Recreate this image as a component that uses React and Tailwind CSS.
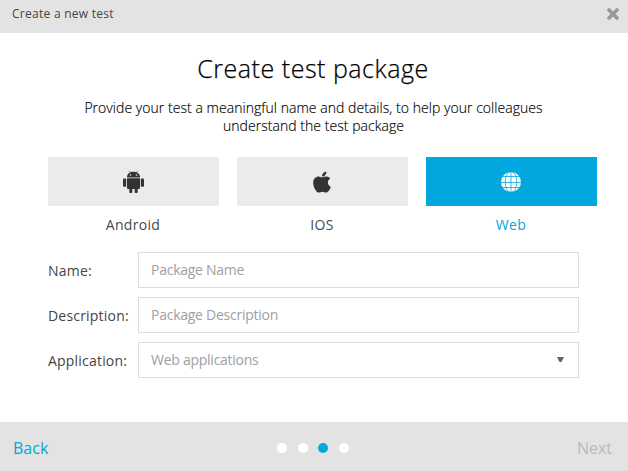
import { FaApple } from "react-icons/fa";

function AndroidIcon() {
  return (
    <svg width="21" height="24" viewBox="0 0 21 24" fill="#333" aria-hidden="true">
      <path d="M6.200 .8 8 3M14.800 .8 13 3" stroke="#555" strokeWidth=".8" />
      <path d="M4 7.400C4 4 6.600 1.800 10.500 1.800s6.500 2.200 6.500 5.600z" />
      <circle cx="7.500" cy="5" r=".8" fill="#ebebeb" />
      <circle cx="13.500" cy="5" r=".8" fill="#ebebeb" />
      <path d="M4 8.200h13V18a1 1 0 0 1-1 1H5a1 1 0 0 1-1-1z" />
      <rect x="0" y="8.500" width="3.200" height="8.300" rx="1" />
      <rect x="17.800" y="8.500" width="3.200" height="8.300" rx="1" />
      <rect x="6.300" y="17" width="3" height="6" rx="1" />
      <rect x="11.700" y="17" width="3" height="6" rx="1" />
    </svg>
  );
}

function GlobeIcon() {
  return (
    <svg width="20" height="20" viewBox="0 0 20 20" aria-hidden="true">
      <circle cx="10" cy="10" r="10" fill="#fff" />
      <g fill="none" stroke="#02a7de" strokeWidth=".8">
        <path d="M10 0v20M0 10.500h20M1 4.500h18M1 15.500h18" />
        <ellipse cx="10" cy="10" rx="5.800" ry="10.500" />
      </g>
    </svg>
  );
}

function Platform({ label, active, children }) {
  return (
    <div className="w-[171px]">
      <div className={"flex h-[49px] items-center justify-center " + (active ? "bg-[#02a7de] pr-[2px]" : "bg-[#ebebeb] pr-px")}>
        {children}
      </div>
      <div className={"mt-[9px] pr-px text-center text-[14px] leading-5 tracking-[0.3px] " + (active ? "text-[#02a7de]" : "text-[#4a4a4a]")}>
        {label}
      </div>
    </div>
  );
}

function Field({ label, value, select }) {
  return (
    <div className="flex h-9 items-center">
      <label className="w-[90px] whitespace-nowrap text-[14px] tracking-[0.2px] text-[#444]">{label}</label>
      <div className="flex h-9 w-[441px] items-center justify-between border border-[#dcdcdc] pr-[14px] pb-px pl-3 text-[14px] tracking-[-0.26px] text-[#a0a0a0]">
        <span>{value}</span>
        {select && (
          <svg width="7" height="5" viewBox="0 0 7 5" fill="#666" aria-hidden="true">
            <path d="M0 0h7L4.500 5h-2z" />
          </svg>
        )}
      </div>
    </div>
  );
}

export default function App() {
  return (
    <div className="flex h-[471px] w-[628px] flex-col overflow-hidden bg-white font-['Open_Sans',sans-serif]">
      <header className="flex h-[33px] items-center justify-between bg-[#e3e3e3] pr-[9px] pb-[5px] pl-3">
        <span className="text-[12px] tracking-[0.27px] text-[#444]">Create a new test</span>
        <svg width="12" height="12" viewBox="0 0 12 12" aria-hidden="true">
          <path d="M2 2l8 8M10 2l-8 8" stroke="#999" strokeWidth="3.600" strokeLinecap="round" />
        </svg>
      </header>
      <main className="flex-1">
        <h1 className="mt-[17px] pr-[2px] text-center text-[25px] leading-9 font-light tracking-[0.52px] text-black [-webkit-text-stroke:0.25px_#000]">Create test package</h1>
        <p className="mt-[13px] pr-px text-center text-[14px] leading-[18px] font-light tracking-[0.04px] text-black [-webkit-text-stroke:0.15px_#000]">
          Provide your test a meaningful name and details, to help your colleagues
          <br />
          understand the test package
        </p>
        <div className="mt-[22px] flex gap-[18px] pl-12">
          <Platform label="Android"><AndroidIcon /></Platform>
          <Platform label="IOS"><FaApple size={24} color="#333" /></Platform>
          <Platform label="Web" active><GlobeIcon /></Platform>
        </div>
        <div className="mt-[17px] flex flex-col gap-[9px] pl-12">
          <Field label="Name:" value="Package Name" />
          <Field label="Description:" value="Package Description" />
          <Field label="Application:" value="Web applications" select />
        </div>
      </main>
      <footer className="flex h-[49px] items-center justify-between bg-[#e3e3e3] pt-[2px] pr-[16px] pl-[13px] text-[16px]">
        <span className="text-[#02a7de]">Back</span>
        <div className="flex">
          <i className="mr-[11px] size-[10px] rounded-full bg-white" />
          <i className="mr-[10px] size-[10px] rounded-full bg-white" />
          <i className="mr-[11px] size-[10px] rounded-full bg-[#02a7de]" />
          <i className="size-[10px] rounded-full bg-white" />
        </div>
        <span className="text-[#bbb]">Next</span>
      </footer>
    </div>
  );
}
